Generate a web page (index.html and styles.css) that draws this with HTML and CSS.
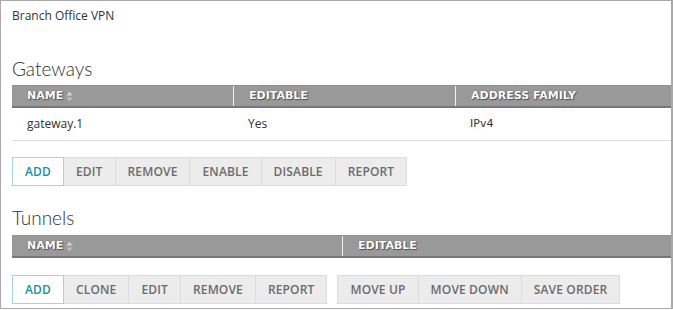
FILE: index.html
```
<!DOCTYPE html>
<html>
<head>
<meta charset="utf-8">
<link rel="stylesheet" href="styles.css">
</head>
<body>
<div class="frame">
  <div class="title">Branch Office VPN</div>

  <h2 class="section gw-title">Gateways</h2>
  <div class="table">
    <div class="thead">
      <div class="th c1">NAME <span class="sort"><svg width="7" height="11" viewBox="0 0 7 11"><path d="M0.5 4.5 L3.5 0.5 L6.5 4.5 Z" fill="#d4d4d4"/><path d="M0.5 6.5 L3.5 10.5 L6.5 6.5 Z" fill="#bdbdbd"/></svg></span></div>
      <div class="th c2">EDITABLE</div>
      <div class="th c3">ADDRESS FAMILY</div>
    </div>
    <div class="tr">
      <div class="td c1">gateway.1</div>
      <div class="td c2">Yes</div>
      <div class="td c3 mono">IPv4</div>
    </div>
  </div>
  <div class="btns gw-btns">
    <div class="btn primary">ADD</div>
    <div class="btn">EDIT</div>
    <div class="btn">REMOVE</div>
    <div class="btn">ENABLE</div>
    <div class="btn">DISABLE</div>
    <div class="btn">REPORT</div>
  </div>

  <h2 class="section tn-title">Tunnels</h2>
  <div class="table">
    <div class="thead">
      <div class="th t1">NAME <span class="sort"><svg width="7" height="11" viewBox="0 0 7 11"><path d="M0.5 4.5 L3.5 0.5 L6.5 4.5 Z" fill="#d4d4d4"/><path d="M0.5 6.5 L3.5 10.5 L6.5 6.5 Z" fill="#bdbdbd"/></svg></span></div>
      <div class="th t2">EDITABLE</div>
    </div>
  </div>
  <div class="btns tn-btns">
    <div class="group">
      <div class="btn primary">ADD</div>
      <div class="btn">CLONE</div>
      <div class="btn">EDIT</div>
      <div class="btn">REMOVE</div>
      <div class="btn">REPORT</div>
    </div>
    <div class="group">
      <div class="btn">MOVE UP</div>
      <div class="btn">MOVE DOWN</div>
      <div class="btn">SAVE ORDER</div>
    </div>
  </div>
</div>
</body>
</html>
```
FILE: styles.css
```
html, body {
  margin: 0;
  padding: 0;
  background: #fff;
}
.frame {
  box-sizing: border-box;
  width: 673px;
  height: 309px;
  border: 1px solid #a9a9a9;
  border-right-width: 2px;
  padding: 7px 0 0 11px;
  overflow: hidden;
  font-family: "Open Sans", "DejaVu Sans", sans-serif;
}
.title {
  font-size: 12px;
  line-height: 16px;
  color: #333;
}
.section {
  margin: 0;
  font-family: "Lato", "Open Sans", sans-serif;
  font-weight: 300;
  font-size: 19px;
  line-height: 24px;
  color: #333;
}
.gw-title { margin-top: 33px; margin-bottom: 4px; }
.tn-title { margin-top: 20px; margin-bottom: 5px; }
.table {
  width: 659px;
}
.thead {
  display: flex;
  height: 23px;
  box-sizing: border-box;
  background: #999;
  border-top: 1px solid #8f8f8f;
  border-bottom: 2px solid #777;
}
.th {
  box-sizing: border-box;
  padding-left: 15px;
  font-family: "DejaVu Sans", "Verdana", sans-serif;
  font-weight: bold;
  font-size: 11px;
  line-height: 20px;
  color: #fff;
  text-shadow: 0 0 1px #444, 1px 1px 1px #555;
  display: flex;
  align-items: center;
  gap: 3px;
}
.c1 { width: 221px; }
.c2 { width: 222px; }
.c3 { flex: 1; }
.th.c2, .th.c3, .th.t2 { border-left: 1px solid #f2f2f2; }
.t1 { width: 330px; }
.t2 { flex: 1; }
.sort { display: inline-flex; text-shadow: none; }
.sort svg { display: block; }
.tr {
  display: flex;
  height: 33px;
  box-sizing: border-box;
  border-bottom: 1px solid #dedede;
}
.td {
  box-sizing: border-box;
  padding-left: 15px;
  font-size: 12px;
  line-height: 32px;
  color: #333;
}
.td.c2, .td.c3 { padding-left: 15px; }
.mono { font-family: "DejaVu Sans", "Verdana", sans-serif; font-size: 11px; }
.btns {
  display: flex;
}
.gw-btns { margin-top: 16px; }
.tn-btns { margin-top: 17px; gap: 11px; }
.group { display: flex; }
.btn {
  box-sizing: border-box;
  height: 29px;
  padding: 0 12px;
  background: #ececec;
  border: 1px solid #dcdcdc;
  margin-right: -1px;
  font-family: "Open Sans", sans-serif;
  font-weight: 600;
  font-size: 12px;
  line-height: 27px;
  color: #6b6b6b;
  letter-spacing: 0.15px;
}
.btn.primary {
  background: #fff;
  border-color: #a8d4d8;
  color: #1b8e9e;
  position: relative;
  z-index: 1;
  width: 52px;
  text-align: center;
  padding: 0;
}
```
